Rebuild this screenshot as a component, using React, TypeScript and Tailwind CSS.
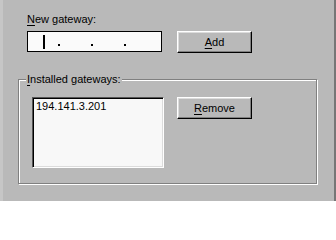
const font = { fontFamily: '"Liberation Sans", Arial, sans-serif' };

function Win98Button({ label, hot }: { label: string; hot: string }) {
  const rest = label.slice(hot.length);
  return (
    <button className="flex h-[22px] w-[75px] items-center justify-center border border-t-white border-l-white border-r-black border-b-black bg-[#b9b9b9] text-[11px] leading-[13px] text-black shadow-[inset_-1px_-1px_0_#808080,inset_1px_1px_0_#dcdcdc]">
      <span><span className="underline underline-offset-[2px]">{hot}</span>{rest}</span>
    </button>
  );
}

function IpField({ dot, cursor }: { dot?: boolean; cursor?: boolean }) {
  return (
    <div className="flex h-full w-[33px] items-center">
      {cursor && <div className="ml-[15px] h-[14px] w-[2px] bg-black" />}
      <div className="flex-1" />
      {dot && <div className="mt-[7px] mr-[1px] h-[2px] w-[2px] bg-black" />}
    </div>
  );
}

export default function App() {
  return (
    <div style={font} className="h-[201px] w-[336px] overflow-hidden border-l-[3px] border-r-2 border-l-[#c6c6c6] border-r-[#767676] bg-[#b9b9b9] text-[11px] leading-[13px] text-black">
      <div className="pt-[13px] pl-[24px]">
        <div><span className="underline underline-offset-[2px]">N</span>ew gateway:</div>
        <div className="mt-[5px] flex items-start gap-[15px]">
          <div className="flex h-[21px] w-[135px] border border-black bg-[#fafafa]">
            <IpField cursor dot />
            <IpField dot />
            <IpField dot />
            <IpField />
          </div>
          <Win98Button label="Add" hot="A" />
        </div>
      </div>
      <div className="relative mt-[26px] ml-[15px] h-[105px] w-[299px] border border-[#808080] shadow-[inset_1px_1px_0_#fff,1px_1px_0_#fff]">
        <div className="absolute top-[-7px] left-[7px] bg-[#b9b9b9] px-[1px]">
          <span className="underline underline-offset-[2px]">I</span>nstalled gateways:
        </div>
        <div className="flex items-start gap-[13px] pt-[17px] pl-[13px]">
          <div className="h-[71px] w-[132px] border border-t-[#555] border-l-[#555] border-r-white border-b-white bg-[#f8f8f8] pl-[3px] pt-[2px] shadow-[inset_1px_1px_0_#000,inset_-1px_-1px_0_#dcdcdc]">
            194.141.3.201
          </div>
          <Win98Button label="Remove" hot="R" />
        </div>
      </div>
    </div>
  );
}
